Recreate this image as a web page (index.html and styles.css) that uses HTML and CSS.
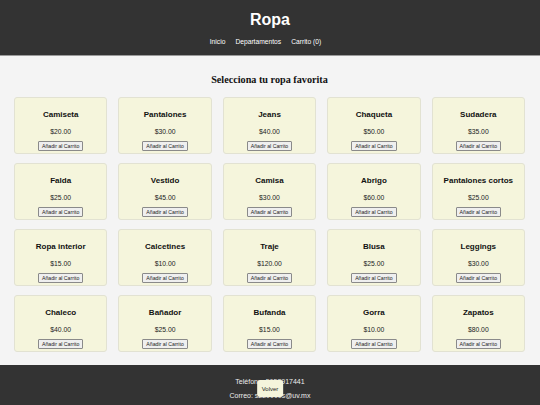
FILE: index.html
```html
<!DOCTYPE html>
<html lang="es">
<head>
<meta charset="utf-8">
<title>Ropa</title>
<link rel="stylesheet" href="styles.css">
</head>
<body>
<header class="site-header">
  <h1 class="site-title">Ropa</h1>
  <nav class="site-nav">
    <a href="#">Inicio</a>
    <a href="#">Departamentos</a>
    <a href="#">Carrito (0)</a>
  </nav>
</header>
<main class="content">
  <h2 class="section-title">Selecciona tu ropa favorita</h2>
  <div class="grid">
    <div class="card"><h3>Camiseta</h3><p>$20.00</p><button>Añadir al Carrito</button></div>
    <div class="card"><h3>Pantalones</h3><p>$30.00</p><button>Añadir al Carrito</button></div>
    <div class="card"><h3>Jeans</h3><p>$40.00</p><button>Añadir al Carrito</button></div>
    <div class="card"><h3>Chaqueta</h3><p>$50.00</p><button>Añadir al Carrito</button></div>
    <div class="card"><h3>Sudadera</h3><p>$35.00</p><button>Añadir al Carrito</button></div>
    <div class="card"><h3>Falda</h3><p>$25.00</p><button>Añadir al Carrito</button></div>
    <div class="card"><h3>Vestido</h3><p>$45.00</p><button>Añadir al Carrito</button></div>
    <div class="card"><h3>Camisa</h3><p>$30.00</p><button>Añadir al Carrito</button></div>
    <div class="card"><h3>Abrigo</h3><p>$60.00</p><button>Añadir al Carrito</button></div>
    <div class="card"><h3>Pantalones cortos</h3><p>$25.00</p><button>Añadir al Carrito</button></div>
    <div class="card"><h3>Ropa interior</h3><p>$15.00</p><button>Añadir al Carrito</button></div>
    <div class="card"><h3>Calcetines</h3><p>$10.00</p><button>Añadir al Carrito</button></div>
    <div class="card"><h3>Traje</h3><p>$120.00</p><button>Añadir al Carrito</button></div>
    <div class="card"><h3>Blusa</h3><p>$25.00</p><button>Añadir al Carrito</button></div>
    <div class="card"><h3>Leggings</h3><p>$30.00</p><button>Añadir al Carrito</button></div>
    <div class="card"><h3>Chaleco</h3><p>$40.00</p><button>Añadir al Carrito</button></div>
    <div class="card"><h3>Bañador</h3><p>$25.00</p><button>Añadir al Carrito</button></div>
    <div class="card"><h3>Bufanda</h3><p>$15.00</p><button>Añadir al Carrito</button></div>
    <div class="card"><h3>Gorra</h3><p>$10.00</p><button>Añadir al Carrito</button></div>
    <div class="card"><h3>Zapatos</h3><p>$80.00</p><button>Añadir al Carrito</button></div>
  </div>
</main>
<footer class="site-footer">
  <p>Teléfono: 5653917441</p>
  <p>Correo: s220000s@uv.mx</p>
</footer>
<button class="back-button">Volver</button>
</body>
</html>
```

FILE: styles.css
```css
html, body {
  margin: 0;
  padding: 0;
}
body {
  font-family: "Liberation Sans", Arial, sans-serif;
  background: #f4f4f4;
  color: #222;
}
.site-header {
  background: #333333;
  color: #fff;
  text-align: center;
  height: 56px;
  box-sizing: border-box;
  padding-top: 11px;
  border-bottom: 1px solid #9a9a9a;
}
.site-title {
  margin: 0;
  font-size: 16px;
  line-height: 18px;
  font-weight: bold;
}
.site-nav {
  margin-top: 8px;
  padding-right: 9px;
  display: flex;
  justify-content: center;
  gap: 10px;
  font-size: 6.7px;
  line-height: 9px;
}
.site-nav a {
  color: #fff;
  text-decoration: none;
}
.content {
  padding: 17px 15px 13px 14px;
}
.section-title {
  margin: 0 0 11px;
  text-align: center;
  font-family: "Liberation Serif", "Times New Roman", serif;
  font-size: 10.2px;
  line-height: 13px;
  font-weight: bold;
  color: #111;
}
.grid {
  display: grid;
  grid-template-columns: repeat(5, 1fr);
  grid-auto-rows: 57px;
  column-gap: 11px;
  row-gap: 9px;
}
.card {
  background: #f5f5dc;
  border: 1px solid #e2e2d2;
  border-radius: 3px;
  box-sizing: border-box;
  text-align: center;
  padding-top: 12px;
  display: flex;
  flex-direction: column;
  align-items: center;
}
.card h3 {
  margin: 0;
  font-size: 8px;
  line-height: 10px;
  font-weight: bold;
  color: #111;
}
.card p {
  margin: 6.5px 0 0;
  font-size: 6.8px;
  line-height: 9px;
  color: #222;
}
.card button {
  margin-top: 5.5px;
  font-family: "Liberation Sans", Arial, sans-serif;
  font-size: 5.2px;
  line-height: 6px;
  padding: 1px 3px;
  background: #efefef;
  border: 1px solid #8a8a8a;
  border-radius: 1px;
  color: #222;
}
.site-footer {
  background: #333333;
  color: #eee;
  text-align: center;
  padding: 10px 0 8px;
  font-size: 7px;
  line-height: 14px;
}
.site-footer p {
  margin: 0;
}
.back-button {
  position: fixed;
  bottom: 8px;
  left: 50%;
  transform: translateX(-50%);
  background: #f5f5dc;
  color: #222;
  border: none;
  border-radius: 3px;
  font-family: "Liberation Sans", Arial, sans-serif;
  font-size: 6px;
  line-height: 8px;
  padding: 5px 4.5px 4px;
}
```
